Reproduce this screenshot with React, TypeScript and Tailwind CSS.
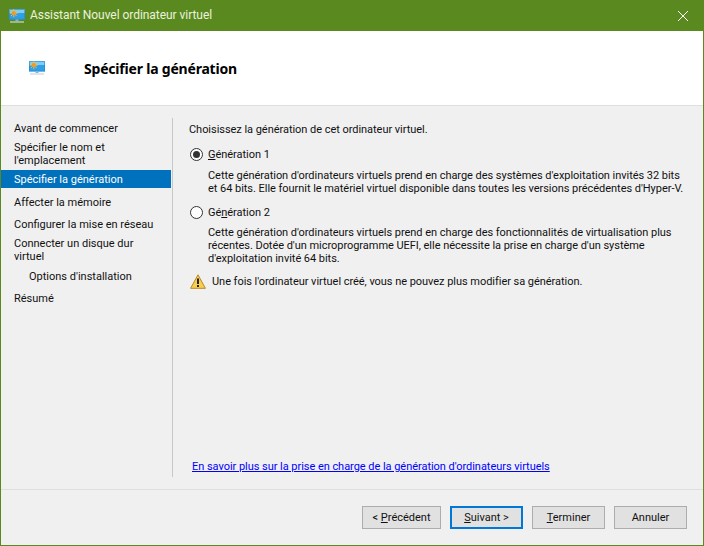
import React from "react";

function Monitor({ size }: { size: number }) {
  return (
    <svg width={size} height={size} viewBox="0 0 16 16" className="block">
      <rect x="0" y="1" width="16" height="10.5" fill="#2f9fe8" />
      <rect x="0" y="1" width="16" height="4" fill="#7fcdf5" />
      <rect x="0.5" y="1.5" width="15" height="9.5" fill="none" stroke="#1f88d4" strokeWidth="1" opacity="0.6" />
      <path d="M4.8 1.2v8M0.8 5.2h8M2 2.4l5.6 5.6M7.6 2.4L2 8" stroke="#f9c04a" strokeWidth="0.9" />
      <circle cx="4.8" cy="5.2" r="2.1" fill="#f29a1f" />
      <rect x="6.5" y="11.5" width="3" height="1.5" fill="#8fb3cc" />
      <rect x="1" y="13.4" width="14" height="1.2" fill="#c9d6df" />
    </svg>
  );
}

function Radio({ checked }: { checked?: boolean }) {
  return (
    <span className="w-[13px] h-[13px] rounded-full border border-[#333333] bg-white flex items-center justify-center shrink-0">
      {checked ? <span className="w-[7px] h-[7px] rounded-full bg-[#333333]" /> : null}
    </span>
  );
}

function Btn({ w, focus, children }: { w: string; focus?: boolean; children: React.ReactNode }) {
  return (
    <div
      className={`${w} h-[23px] flex items-center justify-center bg-[#e1e1e1] text-[#111111] ${
        focus ? "border-2 border-[#0078d7]" : "border border-[#adadad]"
      }`}
    >
      <span>{children}</span>
    </div>
  );
}

export default function App() {
  return (
    <div
      className="w-[704px] h-[546px] flex flex-col bg-[#f0f0f0] border border-t-0 border-[#5a8a1f] text-[11px] leading-[13px] text-[#111111] overflow-hidden whitespace-nowrap"
      style={{ fontFamily: 'Roboto, "Noto Sans", sans-serif' }}
    >
      <div className="h-[31px] bg-[#5a8a1f] flex items-center shrink-0 -mx-px px-[9px] text-[#eaf2dd]">
        <Monitor size={16} />
        <span className="ml-[5px] text-[12px] tracking-[-0.05px]">Assistant Nouvel ordinateur virtuel</span>
        <svg width="10" height="10" viewBox="0 0 10 10" className="ml-auto mr-[7px]">
          <path d="M0 0L10 10M10 0L0 10" stroke="#ffffff" strokeWidth="1" />
        </svg>
      </div>

      <div className="h-[75px] bg-white border-b border-[#dfdfdf] flex items-center pl-[28px] shrink-0">
        <Monitor size={16} />
        <h1 className="ml-[39px] text-[14px] font-bold text-black" style={{ fontFamily: '"Noto Sans", sans-serif', letterSpacing: "-0.2px" }}>Spécifier la génération</h1>
      </div>

      <div className="h-[384px] flex shrink-0 border-b border-[#dfdfdf]">
        <nav className="w-[170px] pt-[13px] shrink-0">
          <div className="h-[18px] pl-[13px] flex items-center">Avant de commencer</div>
          <div className="h-[31px] mt-[2px] pl-[13px] pt-[2px]">Spécifier le nom et<br />l'emplacement</div>
          <div className="h-[18px] pl-[13px] pt-[1px] flex items-center bg-[#0071bc] text-white">Spécifier la génération</div>
          <div className="h-[18px] mt-[5px] pl-[13px] flex items-center">Affecter la mémoire</div>
          <div className="h-[18px] mt-[4px] pl-[13px] flex items-center">Configurer la mise en réseau</div>
          <div className="h-[31px] mt-[1px] pl-[13px] pt-[3px]">Connecter un disque dur<br />virtuel</div>
          <div className="h-[18px] mt-[2px] pl-[28px] flex items-center">Options d'installation</div>
          <div className="h-[18px] mt-[4px] pl-[13px] flex items-center">Résumé</div>
        </nav>

        <div className="w-px h-[359px] mt-[12px] ml-px bg-[#c8c8c8] shrink-0" />

        <main className="flex-1 pl-[16px] pt-[17px] flex flex-col tracking-[-0.04px]">
          <p>Choisissez la génération de cet ordinateur virtuel.</p>

          <div className="flex items-center mt-[12px] ml-px">
            <Radio checked />
            <span className="ml-[5px]"><u>G</u>énération 1</span>
          </div>
          <p className="mt-[8px] ml-[19px]">
            Cette génération d'ordinateurs virtuels prend en charge des systèmes d'exploitation invités 32 bits<br />
            et 64 bits. Elle fournit le matériel virtuel disponible dans toutes les versions précédentes d'Hyper-V.
          </p>

          <div className="flex items-center mt-[11px] ml-px">
            <Radio />
            <span className="ml-[5px]">Gé<u>n</u>ération 2</span>
          </div>
          <p className="mt-[7px] ml-[19px]">
            Cette génération d'ordinateurs virtuels prend en charge des fonctionnalités de virtualisation plus<br />
            récentes. Dotée d'un microprogramme UEFI, elle nécessite la prise en charge d'un système<br />
            d'exploitation invité 64 bits.
          </p>

          <div className="flex items-center mt-[8px] ml-px h-[17px]">
            <svg width="16" height="15" viewBox="0 0 16 15">
              <path d="M8 0.8L15.4 14.3H0.6Z" fill="#f8cf4b" stroke="#b8862b" strokeWidth="1" strokeLinejoin="round" />
              <rect x="7" y="4.5" width="2" height="5.5" fill="#222222" />
              <rect x="7" y="11" width="2" height="2" fill="#222222" />
            </svg>
            <span className="ml-[6px]">Une fois l'ordinateur virtuel créé, vous ne pouvez plus modifier sa génération.</span>
          </div>

          <a className="mt-auto mb-[16px] ml-[3px] text-[#0000ff] underline">
            En savoir plus sur la prise en charge de la génération d'ordinateurs virtuels
          </a>
        </main>
      </div>

      <div className="flex-1 flex items-start justify-end pt-[16px] pr-[16px] gap-[9px]">
        <Btn w="w-[79px]">&lt; <u>P</u>récédent</Btn>
        <Btn w="w-[73px]" focus><u>S</u>uivant &gt;</Btn>
        <Btn w="w-[73px]"><u>T</u>erminer</Btn>
        <Btn w="w-[73px]">Annuler</Btn>
      </div>
    </div>
  );
}
